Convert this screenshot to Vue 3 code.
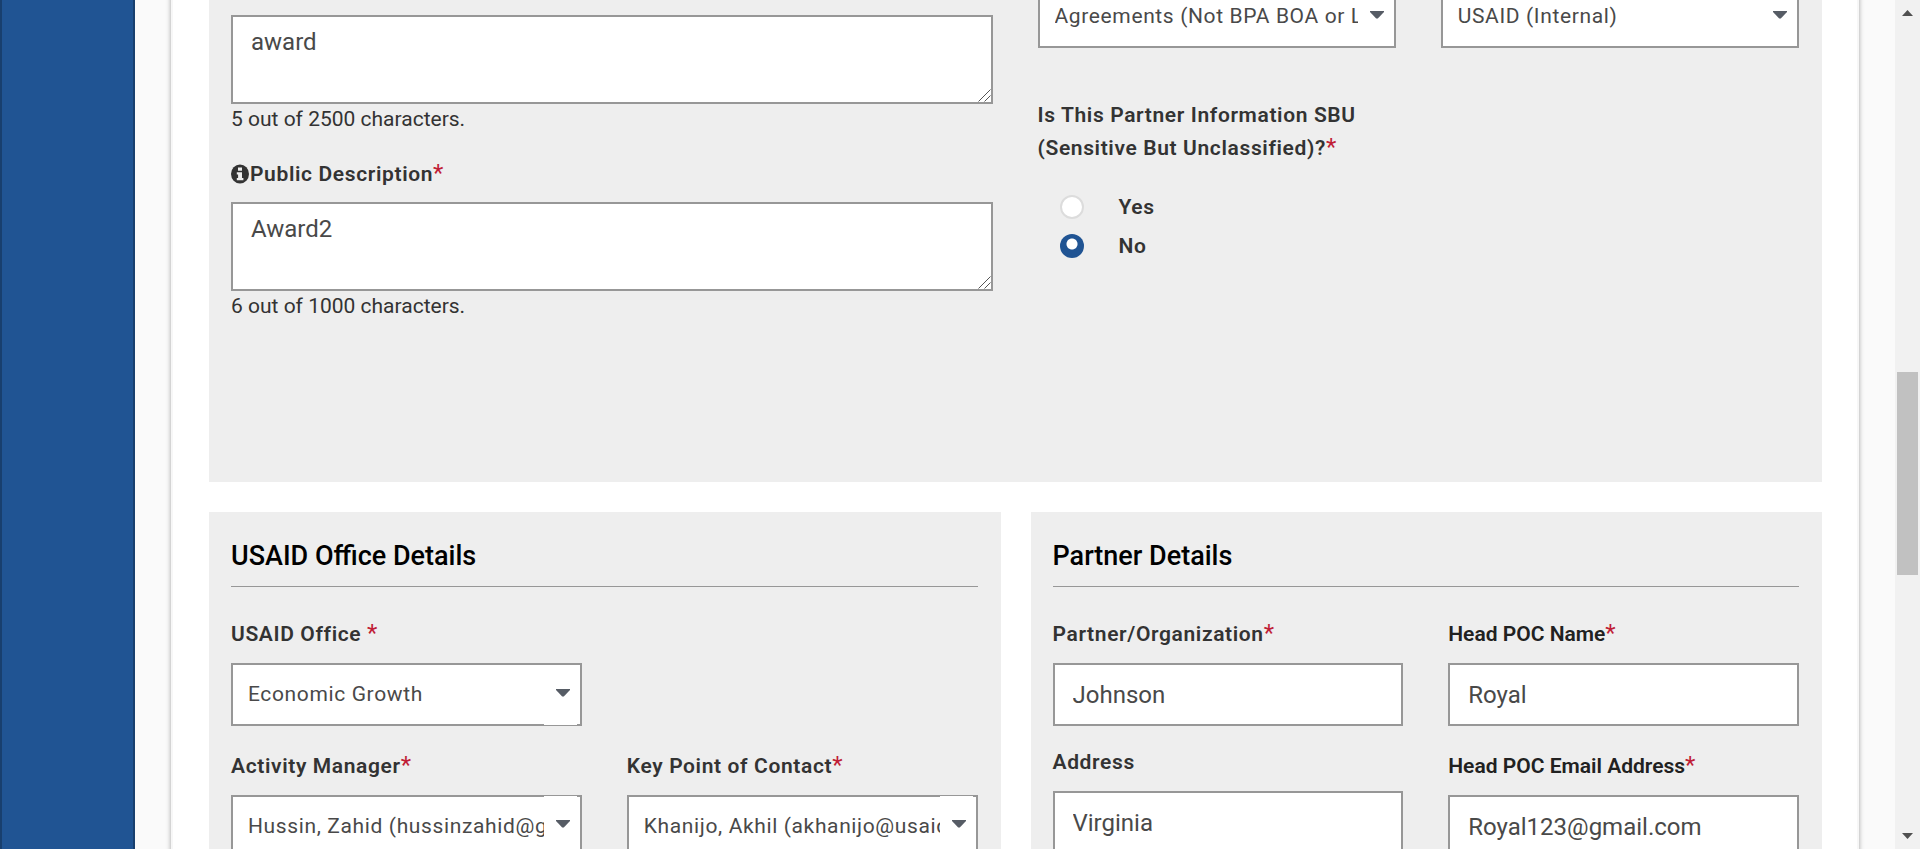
<script setup>
import { ref } from 'vue'

const awardDescription = ref('award')
const publicDescription = ref('Award2')
const sbu = ref('No')
const partner = ref('Johnson')
const address = ref('Virginia')
const pocName = ref('Royal')
const pocEmail = ref('Royal123@gmail.com')
</script>

<template>
  <div class="page">
    <aside class="sidebar"></aside>
    <main class="main">
      <div class="card">
        <section class="panel award">
          <div class="award-left">
            <div class="area">
              <textarea v-model="awardDescription" aria-label="Award description"></textarea>
              <svg class="grip" viewBox="0 0 13 13"><path d="M0.5 12.5 12.5 0.5M6.5 12.5 12.5 6.5" /></svg>
            </div>
            <p class="count">5 out of 2500 characters.</p>
            <label class="label" for="public-description">
              <svg class="info" viewBox="0 0 18 20">
                <ellipse cx="9" cy="10" rx="9" ry="9.5" fill="#333" />
                <path d="M7 3.6h4v3.2H7zM5.8 8.2h5.2v5.7h1.4v2.3H5.8v-2.3h1.3v-3.4H5.8z" fill="#eee" />
              </svg>Public Description<span class="star">*</span>
            </label>
            <div class="area">
              <textarea id="public-description" v-model="publicDescription"></textarea>
              <svg class="grip" viewBox="0 0 13 13"><path d="M0.5 12.5 12.5 0.5M6.5 12.5 12.5 6.5" /></svg>
            </div>
            <p class="count">6 out of 1000 characters.</p>
          </div>
          <div class="award-right">
            <div class="pair">
              <div class="select">
                <select class="control" aria-label="Award type"><option>Agreements (Not BPA BOA or LOC)</option></select>
                <span class="arrow"><svg viewBox="0 0 14 8"><path d="M0 0h14v1L7.8 7.6h-1.6L0 1z" /></svg></span>
              </div>
              <div class="select">
                <select class="control" aria-label="Award source"><option>USAID (Internal)</option></select>
                <span class="arrow"><svg viewBox="0 0 14 8"><path d="M0 0h14v1L7.8 7.6h-1.6L0 1z" /></svg></span>
              </div>
            </div>
            <fieldset class="sbu">
              <legend class="label">Is This Partner Information SBU<br />(Sensitive But Unclassified)?<span class="star">*</span></legend>
              <label class="choice"><input v-model="sbu" type="radio" name="sbu" value="Yes" />Yes</label>
              <label class="choice"><input v-model="sbu" type="radio" name="sbu" value="No" />No</label>
            </fieldset>
          </div>
        </section>

        <div class="panels">
          <section class="panel">
            <h2>USAID Office Details</h2>
            <div class="fields">
              <div class="field">
                <label class="label" for="office">USAID Office <span class="star">*</span></label>
                <div class="select">
                  <select id="office" class="control"><option>Economic Growth</option></select>
                  <span class="arrow low"><svg viewBox="0 0 14 8"><path d="M0 0h14v1L7.8 7.6h-1.6L0 1z" /></svg></span>
                </div>
              </div>
              <div class="field second-row">
                <label class="label" for="manager">Activity Manager<span class="star">*</span></label>
                <div class="select">
                  <select id="manager" class="control"><option>Hussin, Zahid (hussinzahid@gmail.com)</option></select>
                  <span class="arrow high"><svg viewBox="0 0 14 8"><path d="M0 0h14v1L7.8 7.6h-1.6L0 1z" /></svg></span>
                </div>
              </div>
              <div class="field second-row">
                <label class="label" for="contact">Key Point of Contact<span class="star">*</span></label>
                <div class="select">
                  <select id="contact" class="control"><option>Khanijo, Akhil (akhanijo@usaid.gov)</option></select>
                  <span class="arrow high"><svg viewBox="0 0 14 8"><path d="M0 0h14v1L7.8 7.6h-1.6L0 1z" /></svg></span>
                </div>
              </div>
            </div>
          </section>

          <section class="panel">
            <h2>Partner Details</h2>
            <div class="pair columns">
              <div class="column tight">
                <div class="field">
                  <label class="label" for="partner">Partner/Organization<span class="star">*</span></label>
                  <input id="partner" v-model="partner" class="control" type="text" />
                </div>
                <div class="field">
                  <label class="label" for="address">Address</label>
                  <input id="address" v-model="address" class="control" type="text" />
                </div>
              </div>
              <div class="column">
                <div class="field">
                  <label class="label plain" for="poc-name">Head POC Name<span class="star">*</span></label>
                  <input id="poc-name" v-model="pocName" class="control" type="text" />
                </div>
                <div class="field">
                  <label class="label plain" for="poc-email">Head POC Email Address<span class="star">*</span></label>
                  <input id="poc-email" v-model="pocEmail" class="control" type="email" />
                </div>
              </div>
            </div>
          </section>
        </div>
      </div>
    </main>
    <div class="scrollbar" aria-hidden="true">
      <svg viewBox="0 0 11 6"><path d="M0 6 5.5 0 11 6z" /></svg>
      <div class="track"><div class="thumb"></div></div>
      <svg viewBox="0 0 11 6"><path d="M0 0h11L5.5 6z" /></svg>
    </div>
  </div>
</template>

<style>
body {
  margin: 0;
  overflow: hidden;
}
</style>

<style scoped>
.page {
  display: flex;
  height: 100vh;
  overflow: hidden;
  background: #fafafa;
  color: #333;
  font-family: Roboto, "Liberation Sans", sans-serif;
  font-size: 21px;
}

.page * {
  box-sizing: border-box;
}

.sidebar {
  flex: 0 0 135px;
  background: #205493;
  border: solid #183f6e;
  border-width: 0 2px;
}

.main {
  flex: 1;
  min-width: 0;
  padding: 0 36px;
}

.card {
  margin-top: -15px;
  padding: 0 35px 0 36px;
  background: #fff;
  border: solid #f7f7f7;
  border-width: 0 2px;
  box-shadow: 0 0 5px rgba(0, 0, 0, 0.35);
}

.panel {
  padding: 22px 23px 22px 22px;
  background: #eee;
}

.award {
  display: grid;
  grid-template-columns: 1fr 1fr;
  gap: 45px;
  padding-top: 0;
  padding-bottom: 137px;
}

.award-left {
  padding-top: 30px;
}

.area {
  position: relative;
}

textarea {
  display: block;
  width: 100%;
  height: 89px;
  margin: 0;
  padding: 11px 18px;
  border: 2px solid #979797;
  border-radius: 0;
  background: #fff;
  color: #494949;
  font: 24px/28px Roboto, "Liberation Sans", sans-serif;
  resize: none;
}

.grip {
  position: absolute;
  right: 2px;
  bottom: 2px;
  width: 13px;
  height: 13px;
  fill: none;
  stroke: #555;
}

.count {
  margin: 0 0 23px;
  line-height: 31px;
}

.award-left .label {
  margin-bottom: 11px;
}

.label {
  display: block;
  margin-bottom: 12px;
  padding: 0;
  font-weight: 600;
  line-height: 33px;
  letter-spacing: 0.03em;
}

.plain {
  color: #212121;
  letter-spacing: 0;
}

.info {
  width: 18px;
  height: 20px;
  margin-right: 1px;
  vertical-align: -3px;
}

.star {
  color: #c01d36;
  font-size: 24px;
  font-weight: 400;
  line-height: 24px;
}

.pair {
  display: grid;
  grid-template-columns: 1fr 1fr;
  gap: 45px;
}

.control {
  display: block;
  width: 100%;
  height: 63px;
  margin: 0;
  padding: 0 18px;
  border: 2px solid #979797;
  border-radius: 0;
  background: #fff;
  color: #494949;
  font: 24px/28px Roboto, "Liberation Sans", sans-serif;
}

.select {
  position: relative;
}

select.control {
  padding: 0 36px 2px 15px;
  appearance: none;
  font-size: 21px;
  letter-spacing: 0.03em;
}

.arrow {
  position: absolute;
  top: 2px;
  right: 5px;
  bottom: 2px;
  display: flex;
  align-items: center;
  width: 33px;
  padding: 0 7px 4px 12px;
  background: #fff;
  pointer-events: none;
}

.arrow.low {
  bottom: 1px;
}

.arrow.high {
  top: 1px;
}

.arrow svg {
  width: 14px;
  height: 8px;
  fill: #565c65;
}

.sbu {
  margin: 51px 0 0;
  padding: 0;
  border: 0;
}

.sbu .label {
  margin-bottom: 22px;
}

.choice {
  display: flex;
  align-items: center;
  gap: 35px;
  height: 39px;
  padding-left: 22px;
  font-weight: 600;
  letter-spacing: 0.03em;
}

.choice input {
  width: 24px;
  height: 24px;
  margin: 0;
  border: 2px solid #dcdcdc;
  border-radius: 50%;
  background: #fff;
  appearance: none;
}

.choice input:checked {
  border: 0;
  background: radial-gradient(circle at 12px 10px, #fff 5px, #205493 6px);
}

.panels {
  display: grid;
  grid-template-columns: 1fr 1fr;
  gap: 30px;
  margin-top: 30px;
}

h2 {
  margin: 0 0 31px;
  padding-bottom: 8px;
  border-bottom: 1px solid #979797;
  color: #000;
  font-size: 27px;
  font-weight: 500;
  line-height: 44px;
}

.fields {
  display: grid;
  grid-template-columns: 1fr 1fr;
  gap: 24px 45px;
}

.second-row {
  grid-row: 2;
}

.column {
  display: flex;
  flex-direction: column;
  gap: 24px;
}

.column.tight {
  gap: 20px;
}

.field {
  min-width: 0;
}

.scrollbar {
  display: flex;
  flex: 0 0 25px;
  flex-direction: column;
  align-items: center;
  padding: 10px 2px;
  background: #f1f1f1;
}

.scrollbar svg {
  width: 11px;
  height: 6px;
  fill: #505050;
}

.track {
  flex: 1;
  width: 100%;
  padding-top: 356px;
}

.thumb {
  height: 203px;
  background: #c1c1c1;
}
</style>
